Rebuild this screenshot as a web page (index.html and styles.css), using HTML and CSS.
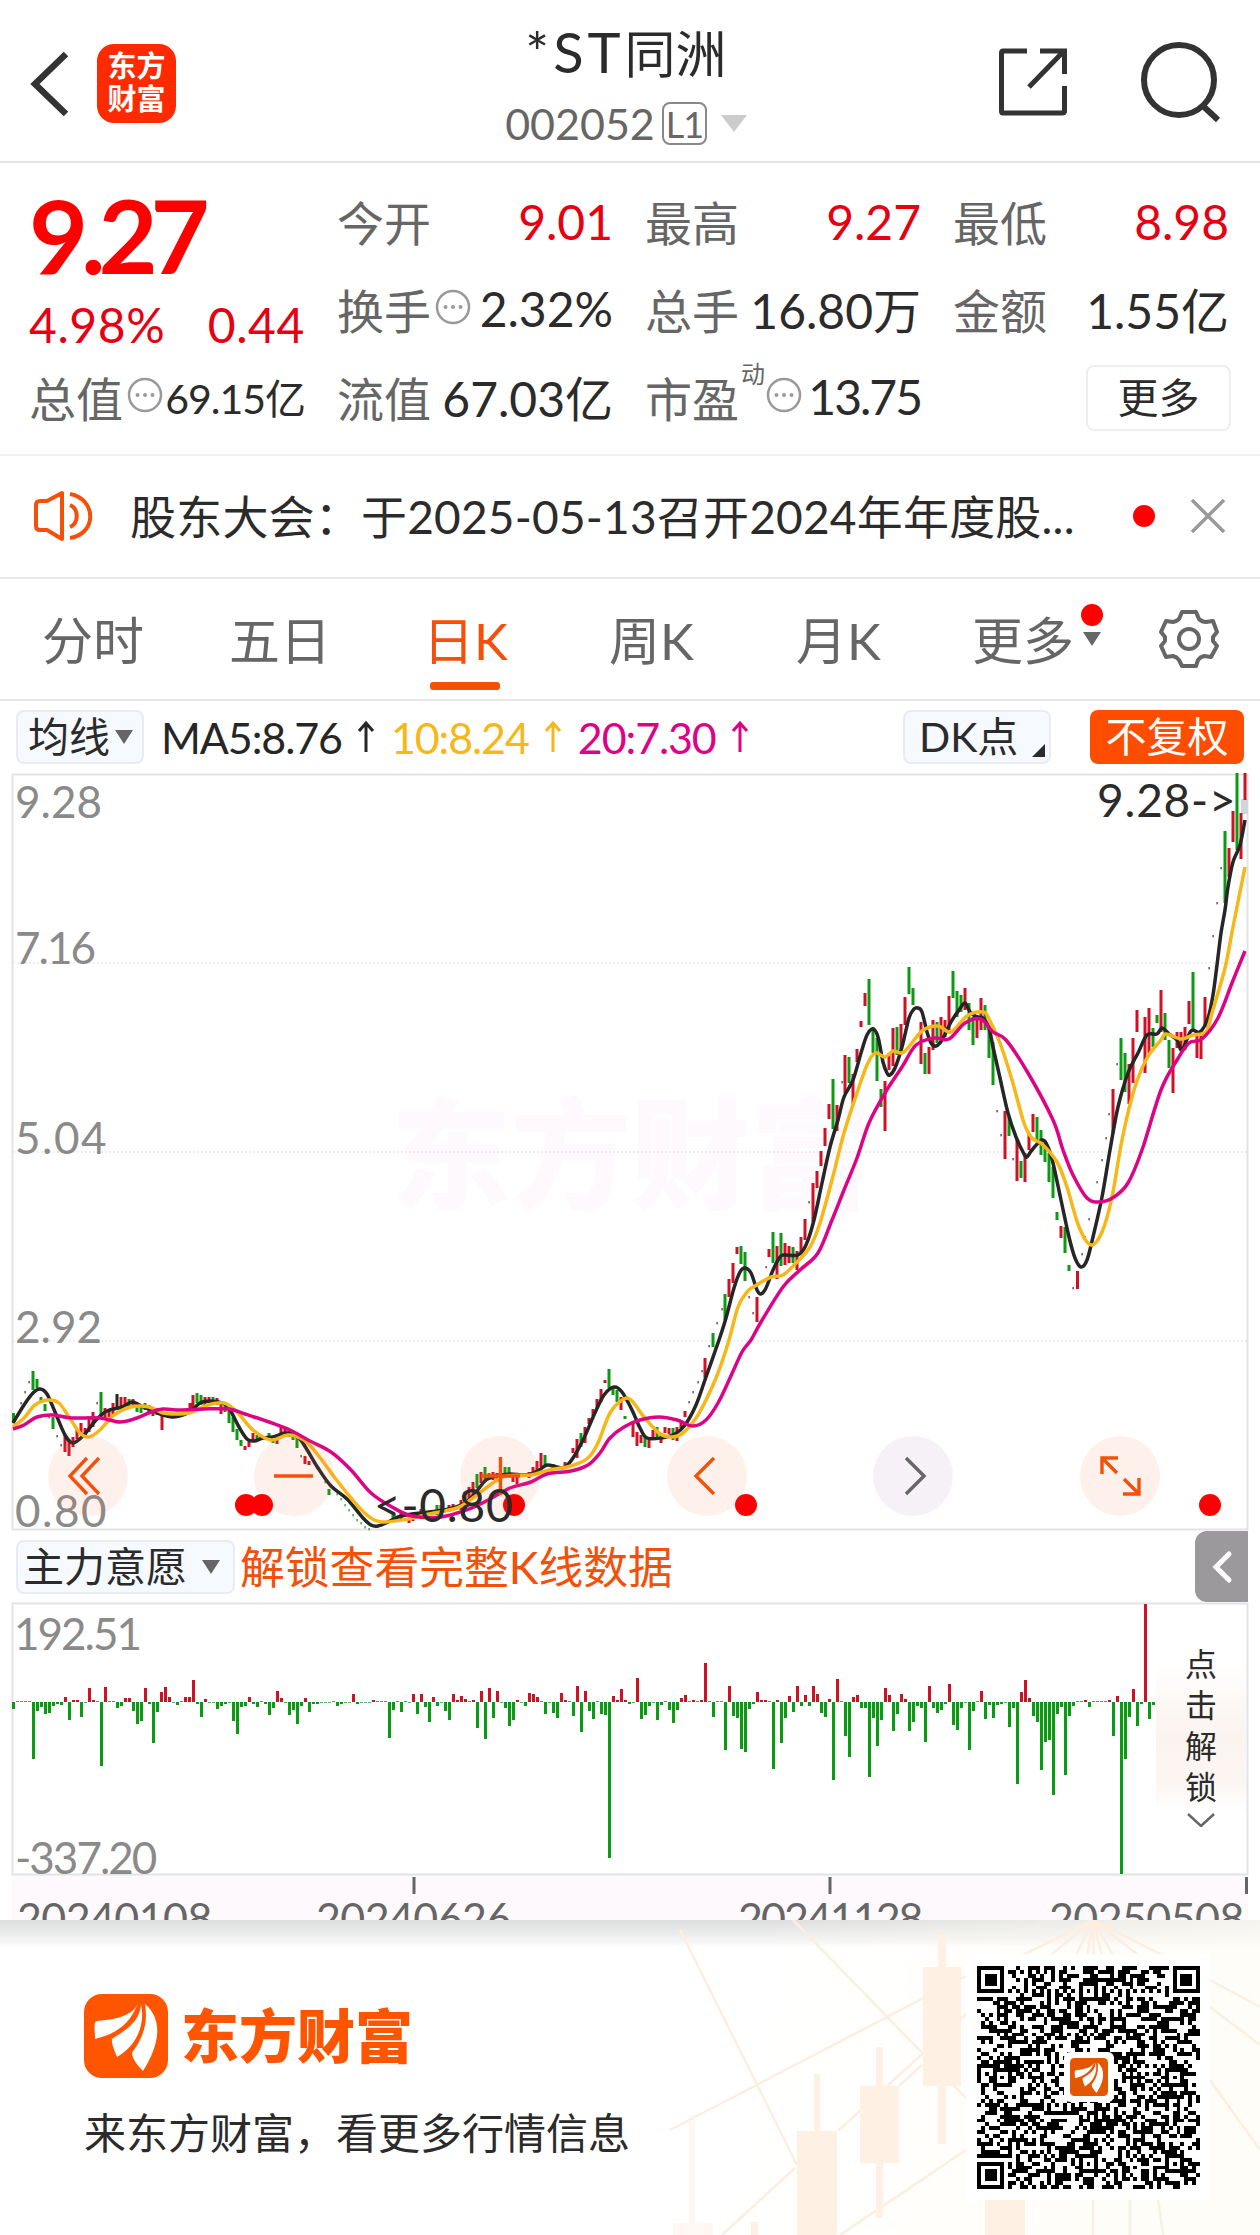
FILE: index.html
```html
<!DOCTYPE html>
<html lang="zh-CN">
<head>
  <meta charset="UTF-8" />
  <meta name="viewport" content="width=device-width, initial-scale=1" />
  <title>*ST同洲 002052</title>
  <link rel="stylesheet" href="styles.css">
</head>
<body>

  <svg class="defs" width="0" height="0">
    <symbol id="wing" viewBox="0 0 84 84">
      <path d="M54 9C50 19 39 25 13 27C9 28 11 35 11 45C31 40 46 31 54 9Z" />
      <path d="M57 10C56 32 32 41 28 45C27 50 31 57 33 63C50 53 62 34 57 10Z" />
      <path d="M61 10C66 38 50 55 48 59C48 65 55 73 59 77C75 52 80 26 61 10Z" />
    </symbol>
    <symbol id="more-dots" viewBox="0 0 36 36">
      <circle cx="18" cy="18" r="16" fill="none" stroke="#999" stroke-width="2.500" />
      <circle cx="10.500" cy="18" r="2" /><circle cx="18" cy="18" r="2" /><circle cx="25.500" cy="18" r="2" />
    </symbol>
  </svg>

  <header class="header">
    <div class="header-left">
      <svg width="40" height="68" viewBox="0 0 40 68"><path d="M36 4L5 34L36 64" fill="none" stroke="#333" stroke-width="6.500" /></svg>
      <div class="app-badge">东方<br>财富</div>
    </div>
    <div class="header-title">
      <h1><span>*ST</span>同洲</h1>
      <div class="code">002052<span class="level">L1</span><i class="tri tri-code"></i></div>
    </div>
    <div class="header-right">
      <svg width="68" height="68" viewBox="0 0 68 68" fill="none" stroke="#333" stroke-width="5">
        <path d="M28 3H4Q2.500 3 2.500 5V63Q2.500 65 4 65H63Q65.500 65 65.500 63V38M41 3H65.500V26M65 3L30 39" />
      </svg>
      <svg width="82" height="82" viewBox="0 0 82 82" fill="none" stroke="#333" stroke-width="6">
        <circle cx="39" cy="39" r="35" /><path d="M62 64L78 79" />
      </svg>
    </div>
  </header>

  <section class="quote">
    <div class="price">
      <div class="now">9.27</div>
      <div class="change"><span>4.98%</span><span>0.44</span></div>
    </div>
    <div class="cell"><label>今开</label><b class="up">9.01</b></div>
    <div class="cell"><label>最高</label><b class="up">9.27</b></div>
    <div class="cell"><label>最低</label><b class="up">8.98</b></div>
    <div class="cell"><label>换手<svg class="info"><use href="#more-dots" /></svg></label><b>2.32%</b></div>
    <div class="cell"><label>总手</label><b>16.80万</b></div>
    <div class="cell"><label>金额</label><b>1.55亿</b></div>
    <div class="cell small"><label>总值<svg class="info"><use href="#more-dots" /></svg></label><b>69.15亿</b></div>
    <div class="cell"><label>流值</label><b>67.03亿</b></div>
    <div class="cell"><label>市盈<sup>动</sup><svg class="info"><use href="#more-dots" /></svg></label><b class="pe">13.75</b></div>
    <div class="cell"><button class="more">更多</button></div>
  </section>

  <section class="notice">
    <svg width="62" height="54" viewBox="0 0 62 54" fill="none" stroke="#f4500a" stroke-width="4">
      <path d="M29 4L14 12H7Q3 12 3 16V37Q3 41 7 41H14L29 50Z" stroke-linejoin="round" />
      <path d="M37 16C46 20 46 34 37 38M37 5C64 10 64 45 37 49" />
    </svg>
    <p>股东大会：于2025-05-13召开2024年年度股...</p>
    <i class="dot"></i>
    <svg width="36" height="36" viewBox="0 0 36 36"><path d="M2 2L34 34M34 2L2 34" stroke="#999" stroke-width="3.500" /></svg>
  </section>

  <nav class="tabs">
    <a>分时</a>
    <a>五日</a>
    <a class="active">日K</a>
    <a>周K</a>
    <a>月K</a>
    <a class="tab-more">更多<i class="dot"></i><i class="tri"></i></a>
    <svg width="60" height="60" viewBox="0 0 60 60" fill="none" stroke="#666" stroke-width="4">
      <path d="M23 3H37L40 10Q43 13 47 13L54 12L58 23L54 28V32L58 37L52 48L45 47Q41 48 39 51L37 57H23L20 51Q18 48 14 47L7 48L2 37L6 32V28L2 23L7 12L14 13Q18 12 20 10Z" stroke-linejoin="round" />
      <circle cx="30" cy="30" r="10" />
    </svg>
  </nav>

  <div class="ma-bar">
    <button class="chip chip-ma">均线<i class="tri"></i></button>
    <span class="ma5">MA5:8.76</span><svg class="arrow ma5"><path d="M9 32V3M2 11L9 3L16 11" /></svg>
    <span class="ma10">10:8.24</span><svg class="arrow ma10"><path d="M9 32V3M2 11L9 3L16 11" /></svg>
    <span class="ma20">20:7.30</span><svg class="arrow ma20"><path d="M9 32V3M2 11L9 3L16 11" /></svg>
    <button class="chip chip-dk">DK点<i class="corner"></i></button>
    <button class="chip chip-fq">不复权</button>
  </div>

  <svg class="chart" viewBox="0 772 1260 759">
    <text class="watermark" x="391" y="1200">东方财富</text>
    <path class="grid" d="M13 963H1247M13 1152H1247M13 1341H1247" />
    <path class="frame" d="M12.500 774.500H1247.500V1529.500H12.500Z" />
    <g class="axis">
      <text x="15" y="818">9.28</text>
      <text x="15" y="964" class="tight">7.16</text>
      <text x="15" y="1154" class="wide">5.04</text>
      <text x="15" y="1343">2.92</text>
      <text x="15" y="1527" class="wide">0.80</text>
    </g>
    <rect x="1241" y="799" width="7" height="15" fill="#d4d4dc" />
    <g id="candles"></g>
    <path id="ma5" class="line" stroke="#262626" />
    <path id="ma10" class="line" stroke="#f7b718" />
    <path id="ma20" class="line" stroke="#dc0485" />
    <g class="knobs">
      <circle cx="88" cy="1476" r="40" /><circle cx="294" cy="1476" r="40" /><circle cx="500" cy="1476" r="40" />
      <circle cx="707" cy="1476" r="40" /><circle cx="913" cy="1476" r="40" class="off" /><circle cx="1120" cy="1476" r="40" />
    </g>
    <g class="knob-icons">
      <path d="M87 1458L70 1476L87 1494M99 1458L82 1476L99 1494" />
      <path d="M274 1476H313" />
      <path d="M481 1476H520M500.500 1457V1495" />
      <path d="M714 1458L696 1476L714 1494" />
      <path d="M906 1458L924 1476L906 1494" stroke="#666" />
      <path d="M1102 1474V1458H1118M1102 1458L1117 1473M1139 1478V1494H1123M1139 1494L1124 1479" />
    </g>
    <g fill="#f00">
      <circle cx="246" cy="1505" r="11" /><circle cx="262" cy="1505" r="11" /><circle cx="514" cy="1505" r="11" />
      <circle cx="746" cy="1505" r="11" /><circle cx="1210" cy="1505" r="11" />
    </g>
    <text class="mark" x="374" y="1522">&lt;-0.80</text>
    <text class="mark" x="1097" y="817">9.28-&gt;</text>
  </svg>

  <div class="sub-bar">
    <button class="chip chip-sub">主力意愿<i class="tri"></i></button>
    <span class="unlock">解锁查看完整K线数据</span>
    <div class="drawer"><svg width="22" height="34" viewBox="0 0 22 34"><path d="M18 4L5 17L18 30" fill="none" stroke="#fff" stroke-width="5" stroke-linecap="round" /></svg></div>
  </div>

  <div class="sub-chart">
    <svg viewBox="0 1602 1260 318" class="volume">
      <rect x="12" y="1875" width="1236" height="45" fill="#fdf9fd" />
      <path class="frame" d="M12.500 1603.500H1247.500V1874.500H12.500Z" />
      <g class="axis">
        <text x="14" y="1650" class="tight">192.51</text>
        <text x="15" y="1874" class="tight">-337.20</text>
      </g>
      <g id="bars"></g>
      <path d="M414 1877V1894M830 1877V1894M1246.500 1877V1894" stroke="#666" stroke-width="3" />
      <g class="dates">
        <text x="17" y="1934">20240108</text>
        <text x="316" y="1934">20240626</text>
        <text x="738" y="1934" class="tight">20241128</text>
        <text x="1049" y="1934">20250508</text>
      </g>
    </svg>
    <div class="unlock-side">
      点<br>击<br>解<br>锁
      <svg width="28" height="14" viewBox="0 0 28 14"><path d="M1 1L14 13L27 1" fill="none" stroke="#666" stroke-width="2.500" /></svg>
    </div>
  </div>

  <footer class="footer">
    <svg class="footer-bg" viewBox="620 1920 640 315">
      <g fill="none" stroke="#fdeee2" stroke-width="2.500">
        <path d="M793 1920L966 2098M670 2130L966 1976M838 2131L966 2014M722 2235L795 2168M680 1930L797 2165M840 2235L966 2150M899 2086L922 2065" />
        <path d="M1093 1920L1005 1964M1093 1920L1040 1964M1093 1920L1072 1964M1093 1920L1086 1964M1093 1920L1094 1964M1093 1920L1104 1964M1093 1920L1118 1964M1093 1920L1150 1964M1093 1920L1180 1964" />
        <path d="M1210 1980L1260 2007M1210 2007L1260 2045M1210 2080L1260 2150M1093 2198V2235M1130 2198V2235M1158 2198L1163 2235" />
      </g>
      <g fill="#fff0e4">
        <path d="M938 1935H946V2144H938ZM923 1967H961V2086H923ZM876 2047H883V2218H876ZM860 2086H899V2163H860ZM985 2200H1025V2235H985Z" />
        <path d="M814 2074H820V2140H814ZM797 2131H837V2235H797ZM751 2222H758V2235H751Z" />
        <path d="M689 2115H695V2223H689ZM673 2223H713V2235H673Z" opacity=".5" />
      </g>
    </svg>
    <div class="brand">
      <div class="brand-row">
        <svg class="brand-logo" viewBox="0 0 84 84"><rect width="84" height="84" rx="18" fill="#ff5400" /><use href="#wing" fill="#fff" /></svg>
        <span>东方财富</span>
      </div>
      <p>来东方财富，看更多行情信息</p>
    </div>
    <div class="qr">
      <svg id="qr" viewBox="0 0 57 57" shape-rendering="crispEdges"></svg>
      <svg class="qr-logo" viewBox="0 0 84 84"><rect width="84" height="84" rx="10" fill="#e35604" /><use href="#wing" fill="#fff" /></svg>
    </div>
  </footer>

  <script src="chart.js"></script>
</body>
</html>
```
FILE: styles.css
```css
* {
  box-sizing: border-box;
}

body {
  margin: 0;
  width: 1260px;
  height: 2235px;
  overflow: hidden;
  background: #fff;
  color: #2b2b2b;
  font-family: Lato, "Noto Sans CJK SC", sans-serif;
  font-size: 46px;
}

.defs {
  display: none;
}

button {
  font-family: inherit;
  color: inherit;
  padding: 0;
}

.tri {
  border: 9px solid transparent;
  border-top: 14px solid #666;
  border-bottom: 0;
}

.dot {
  width: 22px;
  height: 22px;
  border-radius: 50%;
  background: #f00;
}

/* header */
.header {
  display: grid;
  grid-template-columns: 1fr auto 1fr;
  height: 163px;
  border-bottom: 2px solid #e4e4e6;
  padding: 0 38px 0 30px;
}

.header-left,
.header-right {
  display: flex;
  align-items: center;
}

.header-left {
  gap: 27px;
  padding-top: 6px;
}

.header-right {
  justify-content: flex-end;
  gap: 73px;
  padding-top: 3px;
}

.app-badge {
  width: 79px;
  height: 79px;
  border-radius: 17px;
  background: #ff2a00;
  color: #fff;
  font-size: 29px;
  font-weight: 700;
  line-height: 33px;
  text-align: center;
  padding-top: 5px;
}

.header-title {
  text-align: center;
}

h1 {
  margin: 17px 0 0;
  font-size: 51px;
  font-weight: 400;
  line-height: 74px;
}

h1 span {
  font-size: 56px;
  line-height: 1;
  letter-spacing: 4px;
}

.code {
  display: flex;
  align-items: center;
  justify-content: center;
  height: 64px;
  color: #666;
  font-size: 43px;
}

.level {
  border: 2px solid #888;
  border-radius: 8px;
  font-size: 36px;
  line-height: 40px;
  height: 43px;
  width: 45px;
  margin: 0 14px 0 7px;
  letter-spacing: -1px;
}

.tri-code {
  border-width: 17px 13px 0;
  border-top-color: #ccc;
}

/* quote */
.quote {
  display: grid;
  grid-template-columns: repeat(4, 276px);
  grid-template-rows: repeat(3, 88px);
  column-gap: 32px;
  height: 293px;
  padding: 13px 31px 0 29px;
  border-bottom: 2px solid #f3f3f4;
}

.price {
  grid-row: span 2;
  color: #f00;
}

.now {
  font-size: 102px;
  font-weight: 700;
  line-height: 118px;
  letter-spacing: -7px;
}

.change {
  display: flex;
  justify-content: space-between;
  line-height: 62px;
  font-size: 48px;
  letter-spacing: 0.6px;
  color: #e60012;
}

.cell {
  display: flex;
  justify-content: space-between;
  align-items: center;
  white-space: nowrap;
}

.cell label {
  display: flex;
  align-items: center;
  color: #666;
  font-size: 47px;
}

.cell b {
  font-weight: 400;
  font-size: 48px;
}

.cell.small b {
  font-size: 41px;
  letter-spacing: -1px;
}

.cell .pe {
  letter-spacing: -2px;
}

.cell .up {
  color: #e60012;
  padding-top: 2px;
}

.info {
  width: 36px;
  height: 36px;
  margin: 0 0 3px 4px;
  fill: #999;
}

.cell sup {
  align-self: flex-start;
  font-size: 24px;
  line-height: 24px;
  margin-left: 2px;
  width: 24px;
}

.cell sup + .info {
  margin-left: 1px;
}

.more {
  margin: 3px -2px 0 auto;
  width: 145px;
  height: 66px;
  border: 2px solid #eee;
  border-radius: 8px;
  background: #fff;
  font-size: 41px;
  line-height: 56px;
}

/* notice */
.notice {
  display: flex;
  align-items: center;
  height: 123px;
  border-bottom: 2px solid #e8e8ea;
  padding: 0 34px 2px 33px;
}

.notice p {
  flex: 1;
  margin: 0 0 3px 35px;
  white-space: nowrap;
  letter-spacing: 0.2px;
}

.notice .dot {
  margin-right: 35px;
}

/* tabs */
.tabs {
  position: relative;
  display: flex;
  align-items: center;
  height: 122px;
  border-bottom: 2px solid #e8e8ea;
  padding-left: 42px;
  color: #666;
  font-size: 51px;
}

.tabs a {
  width: 187px;
  padding-top: 3px;
  line-height: 117px;
}

.tabs .active {
  position: relative;
  color: #f4500a;
  margin-left: 7px;
  width: 186px;
}

.tabs .active::after {
  content: "";
  position: absolute;
  left: 7px;
  bottom: 9px;
  width: 70px;
  height: 8px;
  border-radius: 3px;
  background: #f4500a;
}

.tabs .tab-more {
  position: relative;
  width: auto;
  margin-right: 85px;
  margin-left: -11px;
}

.tab-more .dot {
  position: absolute;
  left: 109px;
  top: 25px;
}

.tab-more .tri {
  position: absolute;
  left: 111px;
  top: 53px;
}

/* moving average bar */
.ma-bar {
  display: flex;
  align-items: center;
  height: 72px;
  padding: 0 16px 0 16px;
  font-size: 43px;
}

.chip {
  display: flex;
  align-items: center;
  height: 54px;
  border: 2px solid #e8ecf2;
  border-radius: 8px;
  background: #f6f9fe;
  font-size: 41px;
  line-height: 50px;
  white-space: nowrap;
}

.chip-ma {
  width: 128px;
  padding-left: 10px;
  gap: 5px;
  margin-right: 17px;
}

.ma5 { color: #262626; stroke: #262626; }
.ma10 { color: #f7b718; stroke: #f7b718; }
.ma20 { color: #dc0485; stroke: #dc0485; }

.ma-bar span {
  letter-spacing: -1.1px;
}

.arrow {
  width: 18px;
  height: 34px;
  margin: 0 16px 0 15px;
  fill: none;
  stroke-width: 3;
}

.chip-dk {
  width: 148px;
  margin-left: auto;
  padding-left: 14px;
  gap: 14px;
}

.corner {
  align-self: flex-end;
  margin-bottom: 5px;
  border-left: 13px solid transparent;
  border-bottom: 13px solid #2b2b2b;
}

.chip-fq {
  width: 154px;
  margin-left: 39px;
  justify-content: center;
  border: 0;
  background: #ff4d00;
  color: #fff;
}

/* charts */
.chart {
  display: block;
  width: 1260px;
  height: 759px;
  margin-top: -1px;
}

.frame {
  fill: none;
  stroke: #e3e3e6;
  stroke-width: 2;
}

.grid {
  fill: none;
  stroke: #ebe8eb;
  stroke-width: 1.5;
  stroke-dasharray: 2 2;
}

.watermark {
  fill: #fdf9fd;
  font-size: 120px;
  font-weight: 900;
}

.axis {
  fill: #8a8a8a;
  font-size: 44px;
}

.tight {
  letter-spacing: -2px;
}

.wide {
  letter-spacing: 1.5px;
}

.line {
  fill: none;
  stroke-width: 3.5;
  stroke-linejoin: round;
}

.knobs {
  fill: rgba(250, 110, 60, 0.1);
}

.knobs .off {
  fill: #f5f1f7;
}

.knob-icons {
  fill: none;
  stroke: #f4500a;
  stroke-width: 3.4;
}

.mark {
  fill: #2b2b2b;
  font-size: 46px;
  letter-spacing: 0.8px;
}

.sub-bar {
  display: flex;
  align-items: center;
  height: 71px;
  padding: 0 12px 0 16px;
}

.chip-sub {
  width: 219px;
  padding-left: 5px;
  gap: 15px;
}

.unlock {
  margin-left: 5px;
  font-size: 44.8px;
  line-height: 60px;
  color: #f4500a;
}

.drawer {
  display: flex;
  align-items: center;
  justify-content: center;
  width: 53px;
  height: 71px;
  margin-left: auto;
  border-radius: 12px 0 0 12px;
  background: #9c999c;
}

.sub-chart {
  position: relative;
  height: 318px;
}

.volume {
  display: block;
  width: 1260px;
  height: 318px;
}

.dates {
  fill: #666;
  font-size: 43px;
  letter-spacing: -0.6px;
}

.unlock-side {
  position: absolute;
  left: 1156px;
  top: 3px;
  width: 90px;
  height: 268px;
  padding-top: 38px;
  background: linear-gradient(#fff 20%, #fbf3ee 50%, #fcf6f3 66%, #fff 78%);
  font-size: 32px;
  line-height: 41px;
  text-align: center;
}

.unlock-side svg {
  display: block;
  margin: 6px auto 0;
}

/* footer */
.footer {
  position: relative;
  display: flex;
  justify-content: space-between;
  height: 315px;
  padding: 34px 50px 0 84px;
  background: linear-gradient(#dcdedd, #f5f5f5 22px, #fff 27px);
}

.footer-bg {
  position: absolute;
  left: 620px;
  top: 0;
  width: 640px;
  height: 315px;
  background: linear-gradient(100deg, rgba(255, 253, 248, 0) 20%, rgba(255, 252, 244, 0.8));
}

.brand-row {
  display: flex;
  align-items: center;
  gap: 13px;
  margin-top: 40px;
  color: #ff5400;
  font-size: 58px;
  font-weight: 900;
  line-height: 84px;
}

.brand-logo {
  width: 84px;
  height: 84px;
}

.brand p {
  margin: 25px 0 0;
  font-size: 42px;
  line-height: 60px;
}

.qr {
  position: relative;
  width: 244px;
  height: 246px;
  padding: 12px 11px;
  background: #fff;
}

#qr {
  display: block;
  width: 223px;
  height: 223px;
}

.qr-logo {
  position: absolute;
  left: 98px;
  top: 98px;
  width: 50px;
  height: 50px;
  padding: 6px;
  border-radius: 6px;
  background: #fff;
}
```
FILE: chart.js
```js
const NS = 'http://www.w3.org/2000/svg';
const RED = '#cf1126';
const GREEN = '#0b9b12';

// moving averages, x y pairs in chart space
const ma5 = [13,1423,24,1405,33,1393,40,1389,47,1394,55,1412,65,1435,73,1443,84,1435,96,1420,107,1411,122,1407,132,1402,141,1406,153,1411,163,1415,173,1417,188,1413,200,1403,210,1401,222,1403,229,1408,239,1427,247,1439,254,1441,263,1438,273,1437,286,1433,298,1437,306,1448,318,1468,331,1486,347,1499,363,1518,371,1525,378,1526,388,1522,398,1517,412,1514,429,1512,449,1509,465,1503,476,1492,486,1480,496,1476,510,1474,527,1475,539,1470,547,1465,557,1467,565,1467,573,1458,584,1438,594,1415,604,1395,614,1387,622,1392,632,1410,640,1428,647,1438,661,1438,675,1434,685,1425,696,1405,706,1377,719,1340,726,1318,734,1288,740,1272,745,1268,751,1273,757,1290,761,1294,766,1288,773,1270,780,1257,785,1255,798,1255,806,1245,814,1220,822,1183,830,1147,838,1120,844,1097,853,1080,861,1053,867,1035,873,1029,878,1037,883,1062,887,1073,890,1075,895,1068,902,1047,909,1018,914,1009,918,1008,922,1012,927,1032,931,1043,936,1046,942,1040,951,1022,959,1010,965,1003,970,1012,977,1017,983,1018,989,1028,993,1047,1000,1078,1008,1113,1016,1137,1024,1154,1027,1157,1032,1150,1042,1140,1048,1147,1053,1163,1061,1200,1069,1237,1075,1258,1081,1267,1087,1260,1093,1237,1102,1197,1110,1150,1118,1107,1128,1073,1138,1053,1147,1035,1157,1034,1162,1028,1169,1034,1177,1040,1182,1050,1191,1031,1200,1032,1208,1018,1213,995,1217,965,1221,933,1225,910,1228,887,1233,862,1240,845,1245,820];
const ma10 = [13,1427,24,1418,35,1405,48,1400,59,1403,69,1417,80,1433,89,1437,100,1430,114,1415,131,1407,149,1407,163,1413,180,1414,192,1412,208,1405,224,1403,237,1412,253,1430,271,1440,288,1435,304,1440,318,1455,335,1478,351,1498,367,1515,382,1522,408,1519,429,1514,457,1508,473,1498,490,1485,506,1476,531,1475,549,1470,571,1466,588,1458,598,1443,610,1413,624,1399,632,1401,644,1417,659,1433,671,1437,683,1433,696,1418,706,1400,718,1373,729,1340,738,1307,747,1292,755,1286,771,1277,783,1275,796,1263,810,1247,820,1223,832,1180,844,1133,857,1093,867,1065,875,1053,885,1057,893,1051,904,1052,922,1031,938,1026,951,1032,967,1016,983,1012,989,1019,1000,1043,1012,1080,1024,1123,1032,1138,1042,1144,1057,1162,1067,1187,1079,1227,1091,1245,1102,1232,1112,1197,1122,1140,1134,1090,1147,1058,1161,1040,1166,1034,1181,1039,1193,1035,1206,1032,1212,1013,1225,968,1233,927,1245,867];
const ma20 = [13,1429,24,1425,37,1417,53,1415,71,1418,100,1418,120,1422,137,1418,151,1412,163,1409,180,1410,204,1409,229,1409,245,1414,269,1422,290,1430,310,1441,331,1452,351,1470,371,1493,392,1507,412,1516,441,1517,469,1509,490,1499,510,1488,531,1482,547,1474,571,1471,588,1465,600,1453,610,1438,624,1427,640,1420,659,1417,677,1420,693,1426,706,1420,718,1403,730,1378,742,1352,751,1340,761,1322,783,1287,800,1270,818,1253,832,1220,844,1190,857,1158,869,1123,885,1093,902,1067,916,1045,934,1038,949,1039,965,1023,981,1019,993,1032,1006,1040,1028,1073,1053,1120,1063,1150,1073,1175,1087,1198,1100,1202,1114,1197,1128,1183,1142,1150,1161,1090,1177,1060,1189,1043,1202,1039,1218,1018,1232,983,1245,951];

// candles: x, high, low
const reds = [65,1435,1452,69,1440,1456,73,1437,1447,77,1429,1439,81,1423,1435,85,1428,1437,89,1418,1432,93,1412,1427,105,1408,1420,109,1410,1417,113,1403,1415,121,1397,1408,125,1397,1405,133,1399,1407,149,1405,1413,153,1408,1416,162,1412,1430,190,1403,1413,193,1395,1408,205,1397,1405,209,1397,1403,217,1398,1405,221,1403,1414,245,1446,1450,249,1440,1447,253,1433,1440,261,1435,1440,277,1435,1444,281,1427,1435,285,1428,1435,289,1430,1437,305,1456,1464,309,1461,1465,401,1513,1520,409,1517,1523,413,1513,1521,421,1509,1516,441,1505,1512,449,1505,1512,453,1504,1510,461,1500,1510,465,1492,1505,469,1487,1500,473,1482,1497,481,1472,1483,493,1472,1480,497,1473,1482,513,1473,1482,517,1473,1484,529,1472,1478,533,1467,1475,537,1461,1472,541,1453,1467,565,1462,1468,573,1448,1453,577,1439,1458,585,1427,1443,589,1418,1424,593,1409,1416,597,1399,1408,601,1389,1402,605,1380,1383,621,1397,1410,633,1423,1437,637,1432,1446,641,1435,1443,649,1437,1448,653,1430,1440,661,1435,1443,665,1427,1433,669,1428,1434,677,1427,1441,681,1422,1428,685,1411,1417,705,1358,1378,729,1279,1297,733,1263,1283,737,1247,1254,757,1297,1322,769,1249,1257,777,1246,1279,785,1243,1265,789,1246,1263,797,1251,1270,801,1237,1253,805,1219,1240,813,1183,1222,817,1171,1188,821,1151,1166,825,1128,1146,829,1104,1119,837,1105,1131,845,1055,1093,853,1074,1104,857,1049,1062,861,1021,1027,865,993,1006,885,1081,1131,889,1053,1070,893,1028,1066,901,1024,1053,905,997,1025,921,1022,1064,929,1047,1074,933,1020,1050,941,1017,1038,945,1020,1037,949,996,1030,965,988,1010,977,1015,1038,981,998,1030,1005,1111,1159,1017,1140,1181,1025,1153,1182,1029,1133,1150,1033,1114,1132,1061,1226,1238,1077.5,1271,1289,1113,1089,1133,1129,1064,1104,1133,1038,1083,1137,1010,1032,1145,1017,1073,1149,1008,1053,1161,990,1032,1173,1048,1093,1177,1032,1048,1181,1032,1048,1185,1027,1050,1189,1001,1024,1197,1035,1058,1201,1035,1059,1205,997,1027,1229,848,877,1233,811,842,1241,813,859,1245,773,800];
const greens = [13.5,1413,1423,33,1371,1390,37,1379,1388,41,1397,1401,45,1404,1411,53,1417,1429,101,1392,1418,129,1399,1407,137,1403,1412,141,1406,1413,145,1403,1410,157,1408,1415,197,1393,1403,201,1395,1405,213,1397,1404,225,1403,1412,229,1407,1423,233,1417,1432,237,1429,1440,241,1440,1446,257,1435,1440,269,1433,1440,273,1437,1443,293,1432,1440,297,1437,1448,329,1489,1495,393,1513,1518,437,1505,1515,477,1474,1488,485,1467,1482,489,1473,1480,505,1467,1475,509,1467,1477,545,1455,1465,553,1464,1470,581,1433,1447,609,1369,1388,613,1387,1395,617,1390,1402,625,1416,1419,645,1437,1447,657,1427,1437,673,1428,1440,713,1333,1347,725,1294,1320,741,1246,1264,745,1252,1281,773,1232,1263,781,1233,1266,793,1247,1263,833,1079,1129,849,1057,1083,869,979,1025,873,1027,1053,877,1038,1081,881,1089,1107,897,1027,1055,909,967,994,913,988,1005,925,1053,1074,937,1022,1043,953,971,998,957,991,1017,961,995,1012,969,1003,1030,973,1017,1045,985,1005,1030,989,1025,1058,993,1042,1085,1009,1117,1136,1021,1161,1178,1037,1117,1142,1041,1130,1155,1045,1143,1162,1049,1153,1182,1053,1167,1198,1057,1212,1220,1065,1227,1253,1069,1265,1271,1121,1038,1080,1125,1053,1092,1153,1028,1047,1157,1015,1023,1165,1013,1040,1169,1040,1068,1193,972,1032,1225,831,903,1237,773,850];
// limit days, drawn as a single dot
const dots = [21,1403,25,1392,29,1382,49,1417,57,1436,61,1445,97,1403,301,1456,317,1468,321,1473,325,1482,333,1487,337,1494,341,1499,345,1505,349,1510,353,1515,357,1520,361,1523,365,1527,369,1529,689,1402,693,1392,698,1382,702,1371,709,1346,717,1323,722,1309,749,1297,753,1313,766,1267,809,1202,842,1082,997,1111,1001,1135,1013,1159,1073,1288,1082,1254,1085,1237,1089,1219,1097,1182,1102,1160,1106,1138,1109,1114,1117,1064,1209,968,1213,936,1217,903,1221,868];

const volume = [-7,1,1,1,1,-57,-9,-5,-12,-11,-4,-2,-3,5,-18,2,2,-15,-1,14,2,1,-64,15,1,1,-6,-4,4,4,-9,-22,-19,14,-2,-41,-10,10,15,5,-1,-3,1,5,5,22,-2,-15,3,-1,-1,-7,-4,-2,-1,-19,-32,-5,-4,5,-2,-5,1,-2,-13,-6,11,4,-1,-13,-8,-22,-4,4,-10,-2,-2,-1,-1,-1,1,-4,-2,-1,-1,8,-2,-1,-1,-1,2,1,1,1,-36,-8,1,-10,1,-1,8,-12,8,-5,-20,5,-4,-1,-9,-18,8,2,6,3,1,2,-26,11,-37,14,-16,11,-1,-6,-24,-18,2,-1,-4,9,8,5,1,-12,-1,-11,-16,9,2,1,-14,16,-30,11,-9,-17,1,-12,-13,-156,6,2,13,2,-2,-1,24,-17,-13,-4,-1,-18,-3,1,-8,-21,-8,4,7,1,2,1,2,39,1,-15,1,1,-48,16,-14,-16,-47,-50,-7,-2,10,2,2,1,-67,2,-41,-16,6,-10,16,-4,7,-4,16,8,-11,-15,3,-78,23,1,-34,-55,5,7,-6,-6,-75,-16,-44,-18,14,7,-29,-12,8,3,-29,-20,-4,-6,-40,16,-6,-11,-8,-2,18,-23,-28,-6,-1,-48,-9,1,11,-17,-3,-16,-3,-2,-1,-25,-6,-82,10,22,4,-14,-20,-68,-40,-38,-93,-12,-5,-73,-14,-4,1,1,2,-5,1,1,1,1,2,-34,6,-172,-57,-15,13,-24,-2,98,-17,-3];

function add(parent, tag, attrs) {
  const el = document.createElementNS(NS, tag);
  for (const k in attrs) el.setAttribute(k, attrs[k]);
  parent.appendChild(el);
}

function curve(p) {
  let d = `M${p[0]} ${p[1]}`;
  for (let i = 0; i < p.length - 2; i += 2) {
    const a = Math.max(i - 2, 0);
    const b = Math.min(i + 4, p.length - 2);
    d += `C${p[i] + (p[i + 2] - p[a]) / 6} ${p[i + 1] + (p[i + 3] - p[a + 1]) / 6} ` +
      `${p[i + 2] - (p[b] - p[i]) / 6} ${p[i + 3] - (p[b + 1] - p[i + 1]) / 6} ${p[i + 2]} ${p[i + 3]}`;
  }
  return d;
}

document.getElementById('ma5').setAttribute('d', curve(ma5));
document.getElementById('ma10').setAttribute('d', curve(ma10));
document.getElementById('ma20').setAttribute('d', curve(ma20));

const candles = document.getElementById('candles');
function drawCandles(list, color) {
  let d = '';
  for (let i = 0; i < list.length; i += 3) d += `M${list[i]} ${list[i + 1]}V${list[i + 2]}`;
  add(candles, 'path', { d, stroke: color, 'stroke-width': 3 });
}
drawCandles(reds, RED);
drawCandles(greens, GREEN);
drawCandles([117, 1394, 1408], '#262626');
for (let i = 0; i < dots.length; i += 2) {
  add(candles, 'rect', { x: dots[i] - 0.5, y: dots[i + 1] - 1, width: 1.2, height: 2.4, fill: dots[i] > 315 && dots[i] < 370 ? GREEN : '#5a2020' });
}

const bars = document.getElementById('bars');
volume.forEach((v, i) => {
  const h = Math.abs(v);
  add(bars, 'rect', { x: 12 + i * 4, y: v > 0 ? 1702 - h : 1702, width: 3, height: h, fill: v > 0 ? RED : GREEN, opacity: h < 2 ? 0.7 : 1 });
});

// QR, version 10 grid
const N = 57;
function ring(x, y, cx, cy, sizes) {
  const r = Math.max(Math.abs(x - cx), Math.abs(y - cy));
  return r < sizes.length ? sizes[r] : -1;
}
let seed = 2052;
let d = '';
for (let y = 0; y < N; y++) {
  for (let x = 0; x < N; x++) {
    seed = (seed * 1103515245 + 12345) % 2147483648;
    let on = (seed / 2147483648) < 0.5 ? 1 : 0;
    if (x === 6 || y === 6) on = (x + y + 1) % 2;
    for (const [cx, cy] of [[28, 6], [50, 28], [6, 28], [28, 50], [50, 50]]) {
      const v = ring(x, y, cx, cy, [1, 0, 1]);
      if (v >= 0) on = v;
    }
    for (const [cx, cy] of [[3, 3], [53, 3], [3, 53]]) {
      const v = ring(x, y, cx, cy, [1, 1, 0, 1, 0]);
      if (v >= 0) on = v;
    }
    if (on) d += `M${x} ${y}h1v1h-1z`;
  }
}
add(document.getElementById('qr'), 'path', { d });
```
